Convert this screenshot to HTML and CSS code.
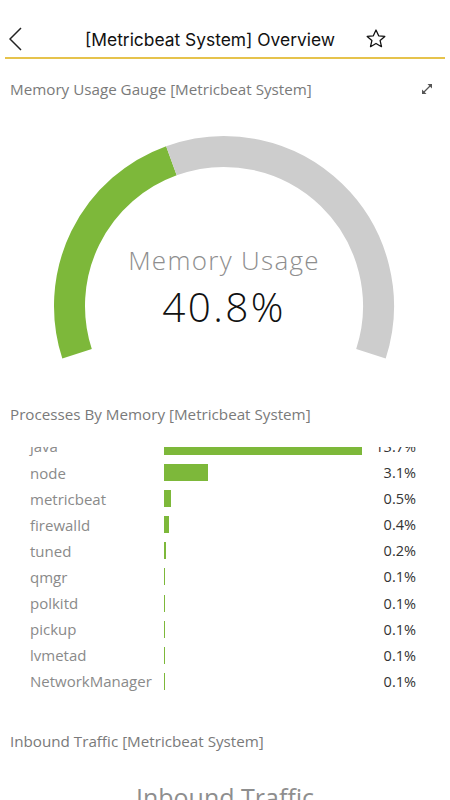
FILE: index.html
```html
<!DOCTYPE html>
<html lang="en">
<head>
    <meta charset="UTF-8">
    <meta name="viewport" content="width=device-width, initial-scale=1.0">
    <title>[Metricbeat System] Overview</title>
    <link rel="stylesheet" href="styles.css">
</head>
<body>

    <header class="nav-bar">
        <button class="back-btn" aria-label="Back">
            <svg width="14" height="24" viewBox="0 0 14 24">
                <polyline points="12,1 1,12 12,23" fill="none" stroke="#222" stroke-width="1.5"/>
            </svg>
        </button>
        <h1 class="nav-title">[Metricbeat System] Overview</h1>
        <button class="star-btn" aria-label="Favourite">
            <svg width="22" height="22" viewBox="0 0 24 24">
                <polygon points="12,2.2 14.9,8.5 21.6,9.2 16.5,13.7 18,20.4 12,16.9 6,20.4 7.5,13.7 2.4,9.2 9.1,8.5"
                         fill="none" stroke="#111" stroke-width="1.4" stroke-linejoin="round"/>
            </svg>
        </button>
    </header>

    <section class="panel">
        <div class="panel-head">
            <h2 class="panel-title">Memory Usage Gauge [Metricbeat System]</h2>
            <svg class="expand-icon" width="12" height="12" viewBox="0 0 12 12">
                <line x1="2.5" y1="9.5" x2="9.5" y2="2.5" stroke="#555" stroke-width="1.3"/>
                <polygon points="6.5,1 11,1 11,5.5" fill="#555"/>
                <polygon points="1,6.5 1,11 5.5,11" fill="#555"/>
            </svg>
        </div>
        <svg class="gauge" width="450" height="270" viewBox="0 0 450 270">
            <path d="M 77.06 248.74 A 154.5 154.5 0 0 1 171.41 55.73" fill="none" stroke="#7db83a" stroke-width="31"/>
            <path d="M 171.41 55.73 A 154.5 154.5 0 0 1 370.94 248.74" fill="none" stroke="#cdcdcd" stroke-width="31"/>
            <text class="gauge-label" x="224" y="165" text-anchor="middle">Memory Usage</text>
            <text class="gauge-value" x="224" y="216.5" text-anchor="middle">40.8%</text>
        </svg>
    </section>

    <section class="panel">
        <div class="panel-head">
            <h2 class="panel-title">Processes By Memory [Metricbeat System]</h2>
        </div>
        <div class="bar-chart">
            <div class="bar-list">
                <div class="bar-row"><span class="bar-name">java</span><span class="bar-track"><span class="bar" style="width: 100%"></span></span><span class="bar-value">13.7%</span></div>
                <div class="bar-row"><span class="bar-name">node</span><span class="bar-track"><span class="bar" style="width: 22.6%"></span></span><span class="bar-value">3.1%</span></div>
                <div class="bar-row"><span class="bar-name">metricbeat</span><span class="bar-track"><span class="bar" style="width: 3.7%"></span></span><span class="bar-value">0.5%</span></div>
                <div class="bar-row"><span class="bar-name">firewalld</span><span class="bar-track"><span class="bar" style="width: 2.9%"></span></span><span class="bar-value">0.4%</span></div>
                <div class="bar-row"><span class="bar-name">tuned</span><span class="bar-track"><span class="bar" style="width: 1.5%"></span></span><span class="bar-value">0.2%</span></div>
                <div class="bar-row"><span class="bar-name">qmgr</span><span class="bar-track"><span class="bar" style="width: 0.8%"></span></span><span class="bar-value">0.1%</span></div>
                <div class="bar-row"><span class="bar-name">polkitd</span><span class="bar-track"><span class="bar" style="width: 0.8%"></span></span><span class="bar-value">0.1%</span></div>
                <div class="bar-row"><span class="bar-name">pickup</span><span class="bar-track"><span class="bar" style="width: 0.8%"></span></span><span class="bar-value">0.1%</span></div>
                <div class="bar-row"><span class="bar-name">lvmetad</span><span class="bar-track"><span class="bar" style="width: 0.8%"></span></span><span class="bar-value">0.1%</span></div>
                <div class="bar-row"><span class="bar-name">NetworkManager</span><span class="bar-track"><span class="bar" style="width: 0.8%"></span></span><span class="bar-value">0.1%</span></div>
            </div>
        </div>
    </section>

    <section class="panel">
        <div class="panel-head">
            <h2 class="panel-title">Inbound Traffic [Metricbeat System]</h2>
        </div>
        <div class="metric-label">Inbound Traffic</div>
    </section>

</body>
</html>
```

FILE: styles.css
```css
body {
    margin: 0;
    padding: 0;
    background-color: #fff;
    font-family: "Open Sans", "Noto Sans", sans-serif;
    overflow: hidden;
}

button {
    border: none;
    background: none;
    padding: 0;
    cursor: pointer;
}

.nav-bar {
    display: flex;
    align-items: center;
    height: 36px;
    margin: 0 5px;
    padding-top: 21px;
    border-bottom: 2px solid #e6c34c;
}

.back-btn {
    width: 50px;
    height: 36px;
    padding-left: 4px;
    display: flex;
    align-items: center;
}

.nav-title {
    flex: 1;
    margin: 0;
    text-align: center;
    font-family: Inter, "Liberation Sans", sans-serif;
    font-size: 17.4px;
    font-weight: 400;
    color: #111;
}

.star-btn {
    width: 80px;
    height: 36px;
    display: flex;
    align-items: center;
}

.panel-head {
    display: flex;
    align-items: center;
    justify-content: space-between;
    padding: 0 17px 0 10px;
}

.panel-title {
    margin: 0;
    font-size: 15.2px;
    line-height: 20px;
    font-weight: 400;
    color: #7a7a7a;
}

.panel:first-of-type .panel-head {
    margin-top: 20px;
}

.gauge {
    display: block;
    margin-top: 6px;
}

.gauge-label {
    font-family: "Open Sans", sans-serif;
    font-size: 26px;
    font-weight: 300;
    letter-spacing: 1.3px;
    fill: #8e8e8e;
}

.gauge-value {
    font-family: "Open Sans", sans-serif;
    font-size: 40.5px;
    font-weight: 300;
    letter-spacing: 2.4px;
    fill: #111;
}

.panel:nth-of-type(2) .panel-head {
    margin-top: 29px;
}

.bar-chart {
    height: 247px;
    margin-top: 23px;
    overflow: hidden;
}

.bar-list {
    margin-top: -13.6px;
}

.bar-row {
    display: grid;
    grid-template-columns: 133px 199px 1fr;
    align-items: center;
    height: 26.1px;
    padding: 0 34px 0 30px;
    font-size: 15px;
}

.bar-name {
    color: #8a8a8a;
    white-space: nowrap;
}

.bar-track {
    display: flex;
    padding-left: 0.5px;
}

.bar {
    height: 17px;
    min-width: 1.5px;
    background-color: #7db83a;
}

.bar-value {
    text-align: right;
    font-size: 14.5px;
    color: #333;
}

.panel:nth-of-type(3) .panel-head {
    margin-top: 37px;
}

.metric-label {
    margin-top: 29px;
    text-align: center;
    font-size: 25px;
    color: #8e8e8e;
}
```
